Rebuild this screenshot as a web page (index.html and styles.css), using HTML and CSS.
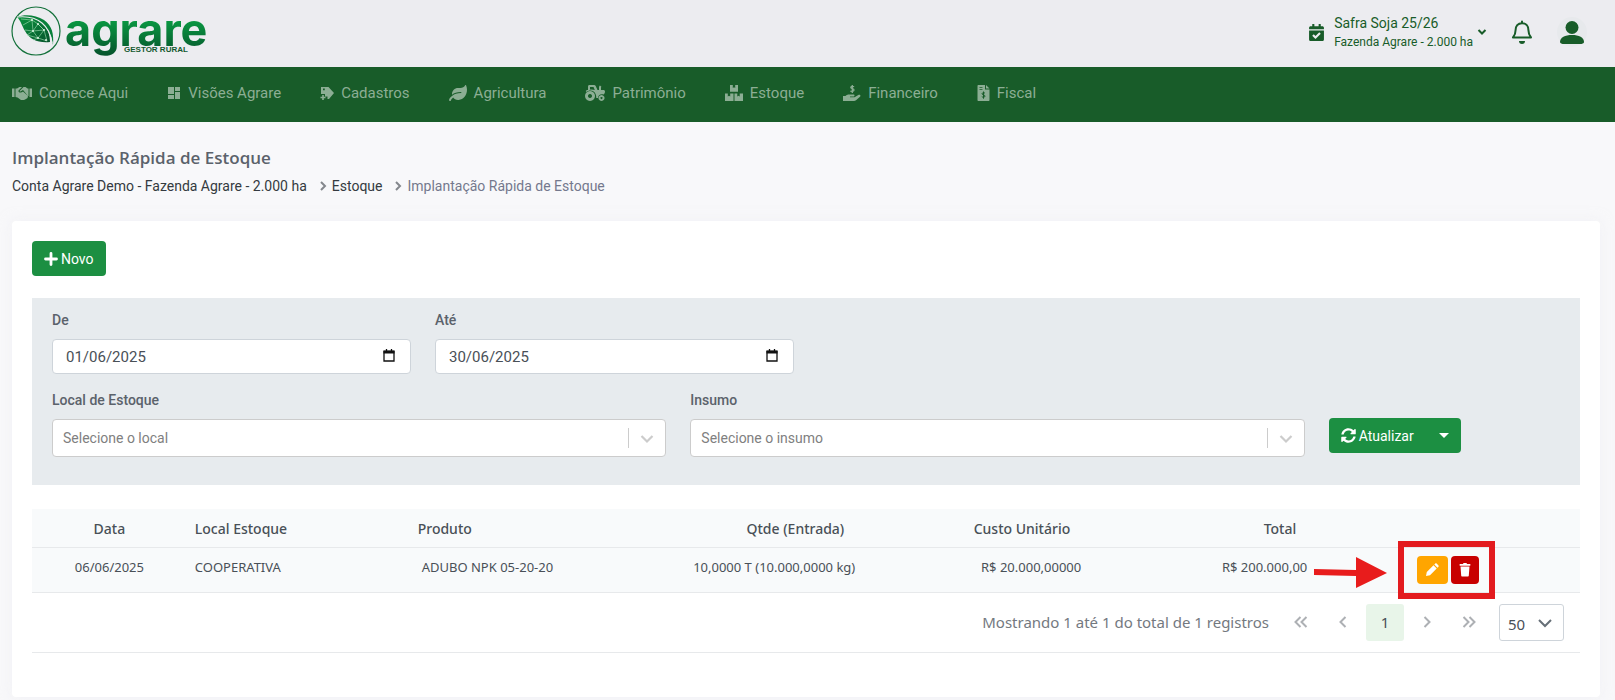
FILE: index.html
```
<!DOCTYPE html>
<html lang="pt-BR">
<head>
    <meta charset="UTF-8">
    <meta name="viewport" content="width=device-width, initial-scale=1.0">
    <title>Implantação Rápida de Estoque</title>
    <link rel="stylesheet" href="styles.css">
</head>
<body>
    <header class="topbar">
        <a class="logo" href="#">
            <svg class="logo-mark" viewBox="0 0 50 50" aria-hidden="true">
                <defs>
                    <linearGradient id="leafFill" x1="0" y1="0" x2="1" y2="1">
                        <stop offset="0" stop-color="#0b9440"/>
                        <stop offset="1" stop-color="#06552c"/>
                    </linearGradient>
                </defs>
                <circle cx="25" cy="25" r="24" fill="none" stroke="#14713b" stroke-width="1.2"/>
                <path d="M6 11c4 4 5 9 8 14 5 9 13 12 25 11 0-7-2-14-8-19-7-6-15-7-25-6z" fill="url(#leafFill)"/>
                <path d="M6 11c8-3 19-2 27 3 8 6 10 13 9 25-1-8-4-16-11-21-7-6-15-7-25-7z" fill="#08803a"/>
                <path d="M6 11c10-1 18 0 25 6 6 5 9 12 10 20" fill="none" stroke="#ececf0" stroke-width="1.1"/>
                <path d="M10 13l11 1 6 4 6 6 3 11M12 19l9-5 1 11 5-7 6 6-6 8-11-3 6-4 11-1M14 24l8 1 5 7 9 3M27 32l-5 2" fill="none" stroke="#a5e0b5" stroke-width=".6"/>
                <g fill="#d8f5df">
                    <circle cx="21" cy="14" r="1"/><circle cx="27" cy="18" r="1"/><circle cx="22" cy="25" r="1"/>
                    <circle cx="27" cy="32" r="1"/><circle cx="33" cy="24" r="1"/><circle cx="35" cy="34" r="1"/>
                </g>
            </svg>
            <span class="logo-text">agrare<small class="logo-sub">GESTOR RURAL</small></span>
        </a>
        <div class="topbar-right">
            <button class="safra" type="button">
                <svg class="safra-icon" viewBox="0 0 448 512"><path fill="currentColor" d="M436 160H12c-6.627 0-12-5.373-12-12v-36c0-26.51 21.49-48 48-48h48V12c0-6.627 5.373-12 12-12h40c6.627 0 12 5.373 12 12v52h128V12c0-6.627 5.373-12 12-12h40c6.627 0 12 5.373 12 12v52h48c26.51 0 48 21.49 48 48v36c0 6.627-5.373 12-12 12zM12 192h424c6.627 0 12 5.373 12 12v260c0 26.51-21.49 48-48 48H48c-26.51 0-48-21.49-48-48V204c0-6.627 5.373-12 12-12zm333.296 95.947l-28.169-28.398c-4.667-4.705-12.265-4.736-16.97-.068L194.12 364.665l-45.98-46.352c-4.667-4.705-12.266-4.736-16.971-.068l-28.397 28.17c-4.705 4.667-4.736 12.265-.068 16.97l82.601 83.269c4.667 4.705 12.265 4.736 16.97.068l142.953-141.805c4.705-4.667 4.736-12.265.068-16.97z"/></svg>
                <span class="safra-text">
                    <span class="safra-name">Safra Soja 25/26</span>
                    <span class="safra-farm">Fazenda Agrare - 2.000 ha</span>
                </span>
                <svg class="safra-caret" viewBox="0 0 10 10"><path d="M1.500 3L5 6.500 8.500 3" fill="none" stroke="currentColor" stroke-width="2"/></svg>
            </button>
            <button class="icon-button bell" type="button" aria-label="Notificações">
                <svg viewBox="0 0 22 24"><path d="M11 3.200c-4.200 0-6.400 3-6.400 6.800 0 4-.8 5.300-2.600 7.500h18c-1.800-2.200-2.600-3.500-2.600-7.500 0-3.800-2.200-6.800-6.400-6.800zM11 1.500v1.500" fill="none" stroke="currentColor" stroke-width="2" stroke-linejoin="round" stroke-linecap="round"/><path d="M8 21h6a3 3 0 0 1-6 0z" fill="currentColor"/></svg>
            </button>
            <button class="icon-button avatar" type="button" aria-label="Usuário">
                <svg viewBox="0 0 24 24"><circle cx="12" cy="7.500" r="6.500" fill="currentColor"/><path d="M0 22c0-4.500 5-7 12-7s12 2.500 12 7c0 1.500-2 2-4 2H4c-2 0-4-.5-4-2z" fill="currentColor"/></svg>
            </button>
        </div>
    </header>

    <nav class="menu">
        <a href="#">
            <svg width="20" height="14" viewBox="0 0 40 28" fill="currentColor"><path d="M0 5h5v17H0zM35 5h5v17h-5zM7 5h3l5-3h5l-7 7c-1 5 6 5 9 2l10 9-1 4-3 2-4 2h-6l-7-5-4-1H7zM23 2h4l4 3h2v15h-1L22 8l-5 3c-2 0-2-1-1-2z"/></svg>
            Comece Aqui
        </a>
        <a href="#">
            <svg width="14" height="14" viewBox="0 0 14 14" fill="currentColor"><path d="M1 1h6v7H1zM8 1h5v4H8zM1 9h6v4H1zM8 6h5v7H8z"/></svg>
            Visões Agrare
        </a>
        <a href="#">
            <svg width="14" height="14" viewBox="0 0 14 14" fill="currentColor"><path fill-rule="evenodd" d="M1 1h7.500L14 7l-5 6H7.500v-2.500H5V8H1zM3 2.500v1.800h1.800V2.500zM2.200 9h1.600v1.700h1.700v1.600H3.800V14H2.200v-1.700H.5v-1.600h1.700z"/></svg>
            Cadastros
        </a>
        <a href="#">
            <svg width="18" height="16" viewBox="0 0 576 512" fill="currentColor"><path d="M546.2 9.7c-5.600-12.500-21.600-13-28.300-1.200C486.900 62.400 431.400 96 368 96h-80C182 96 96 182 96 288c0 7 .8 13.700 1.500 20.500C161.300 262.800 253.400 224 384 224c8.800 0 16 7.200 16 16s-7.200 16-16 16C132.600 256 26 410.100 2.400 468c-6.600 16.300 1.200 34.900 17.500 41.600 16.400 6.800 35-1.100 41.800-17.300 1.500-3.600 20.900-47.900 71.900-90.600 32.400 43.900 94 85.800 174.900 77.200C465.500 467.500 576 326.700 576 154.300c0-50.200-10.800-102.200-29.800-144.600z"/></svg>
            Agricultura
        </a>
        <a href="#">
            <svg width="20" height="16" viewBox="0 0 20 16" fill="currentColor"><path fill-rule="evenodd" d="M3 1.500C3 .7 3.500 0 4.500 0H9c.8 0 1.400.4 1.700 1.100L12.500 5H14V2.500c0-1 .5-1.700 1-2.100l1.400 1.300c-.3.3-.4.6-.4 1V5h2.500c.8 0 1.500.7 1.500 1.500 0 1.300-.6 2.300-1.500 3-3-.9-5.500.8-5.500 3.500h-1.700c.2-4.500-2.300-7.500-6-7.500C3.800 5.500 2.600 6 1.500 7L.7 6 2 5h1zM5 2v2.500c1.500-.3 3.600 0 4.800.5L8.500 2z"/><path fill-rule="evenodd" d="M5 6a5 5 0 1 0 .01 0zM5 9a2 2 0 1 1-.01 0zM16.500 10a3 3 0 1 0 .01 0zM16.500 12a1 1 0 1 1-.01 0z"/></svg>
            Patrimônio
        </a>
        <a href="#">
            <svg width="18" height="16" viewBox="0 0 18 16" fill="currentColor"><path d="M5 0h2.800v3l1.200-.7 1.200.7V0H13v6.800H5zM0 8.500h2.800v3l1.200-.7 1.200.7v-3H8.500V16H0zM9.500 8.500h2.800v3l1.200-.7 1.200.7v-3H18V16H9.500z"/></svg>
            Estoque
        </a>
        <a href="#">
            <svg width="18" height="16" viewBox="0 0 18 16" fill="currentColor"><path d="M0 11h2.500c1-1 2-1.500 3.500-1.500h4.500c1.400 0 1.400 2 0 2H7v.8h4.500L15.300 10c1.500-1 2.900.7 1.700 1.800l-4 3.400c-.6.500-1.200.8-2 .8H0z"/><path d="M11 1.800C10.500 1.200 7.800 1 7.800 2.500S11 3.300 11 5 8 6.600 7.400 5.800M9.300 0v8" fill="none" stroke="currentColor" stroke-width="1.300"/></svg>
            Financeiro
        </a>
        <a href="#">
            <svg width="13" height="16" viewBox="0 0 13 16" fill="currentColor"><path fill-rule="evenodd" d="M1.500 0H8v4.500h4.500V15c0 .6-.4 1-1 1h-10c-.6 0-1-.4-1-1V1c0-.6.4-1 1-1zM2.500 2v.8h3V2zM2.500 4v.8h3V4zM9 0l3.500 3.500H9z"/><path d="M8 8.200C7.500 7.600 5 7.500 5 8.800s3 .8 3 2.300-2.600 1.300-3.200.5M6.500 6.500v7.200" fill="none" stroke="#185c29"/></svg>
            Fiscal
        </a>
    </nav>

    <main class="page">
        <h1 class="page-title">Implantação Rápida de Estoque</h1>
        <ol class="breadcrumb">
            <li><a href="#">Conta Agrare Demo - Fazenda Agrare - 2.000 ha</a></li>
            <li>
                <svg class="crumb-sep" viewBox="0 0 8 10"><path d="M2 1l4 4-4 4" fill="none" stroke="currentColor" stroke-width="2"/></svg>
                <a href="#">Estoque</a>
            </li>
            <li class="current">
                <svg class="crumb-sep" viewBox="0 0 8 10"><path d="M2 1l4 4-4 4" fill="none" stroke="currentColor" stroke-width="2"/></svg>
                Implantação Rápida de Estoque
            </li>
        </ol>

        <section class="card">
            <button class="btn btn-success" type="button">
                <svg width="14" height="14" viewBox="0 0 14 14"><path d="M7 1.500v11M1.500 7h11" stroke="currentColor" stroke-width="2.800" stroke-linecap="round"/></svg>
                Novo
            </button>

            <form class="filters">
                <div class="field span-3">
                    <label for="de">De</label>
                    <div class="control">
                        <input class="input" id="de" type="text" value="01/06/2025">
                        <svg class="calendar" viewBox="0 0 12 13"><path d="M1 2.500h10v9.500H1zM3.500 0v2M8.500 0v2" fill="none" stroke="#111" stroke-width="1.300"/><path d="M.5 1.500h11V4.500H.5z" fill="#111"/></svg>
                    </div>
                </div>
                <div class="field span-3">
                    <label for="ate">Até</label>
                    <div class="control">
                        <input class="input" id="ate" type="text" value="30/06/2025">
                        <svg class="calendar" viewBox="0 0 12 13"><path d="M1 2.500h10v9.500H1zM3.500 0v2M8.500 0v2" fill="none" stroke="#111" stroke-width="1.300"/><path d="M.5 1.500h11V4.500H.5z" fill="#111"/></svg>
                    </div>
                </div>
                <div class="field local">
                    <label for="local">Local de Estoque</label>
                    <div class="control">
                        <select class="select" id="local"><option>Selecione o local</option></select>
                        <svg class="select-arrow" viewBox="0 0 38 20"><path d="M.5 0v20" stroke="#ccc"/><path d="M13.500 8l5.500 5.500L24.500 8" fill="none" stroke="#ccc" stroke-width="2.200"/></svg>
                    </div>
                </div>
                <div class="field span-5">
                    <label for="insumo">Insumo</label>
                    <div class="control">
                        <select class="select" id="insumo"><option>Selecione o insumo</option></select>
                        <svg class="select-arrow" viewBox="0 0 38 20"><path d="M.5 0v20" stroke="#ccc"/><path d="M13.500 8l5.500 5.500L24.500 8" fill="none" stroke="#ccc" stroke-width="2.200"/></svg>
                    </div>
                </div>
                <div class="update">
                    <button class="btn btn-success" type="button">
                        <svg width="15" height="15" viewBox="0 0 512 512"><path fill="currentColor" d="M370.720 133.280C339.458 104.008 298.888 87.962 255.848 88c-77.458.068-144.328 53.178-162.791 126.850-1.344 5.363-6.122 9.150-11.651 9.150H24.103c-7.498 0-13.194-6.807-11.807-14.176C33.933 94.924 134.813 8 256 8c66.448 0 126.791 26.136 171.315 68.685L463.030 40.970C478.149 25.851 504 36.559 504 57.941V192c0 13.255-10.745 24-24 24H345.941c-21.382 0-32.090-25.851-16.971-40.971l41.750-41.749zM32 296h134.059c21.382 0 32.090 25.851 16.971 40.971l-41.750 41.750c31.262 29.273 71.835 45.319 114.876 45.280 77.418-.070 144.315-53.144 162.787-126.849 1.344-5.363 6.122-9.150 11.651-9.150h57.304c7.498 0 13.194 6.807 11.807 14.176C478.067 417.076 377.187 504 256 504c-66.448 0-126.791-26.136-171.315-68.685L48.970 471.030C33.851 486.149 8 475.441 8 454.059V320c0-13.255 10.745-24 24-24z"/></svg>
                        Atualizar
                    </button>
                    <button class="btn btn-success" type="button" aria-label="Mais opções">
                        <svg width="10" height="5" viewBox="0 0 10 5"><path d="M0 0h10L5 5z" fill="currentColor"/></svg>
                    </button>
                </div>
            </form>

            <table class="grid">
                <thead>
                    <tr>
                        <th class="col-date">Data</th>
                        <th class="col-place">Local Estoque</th>
                        <th class="col-product">Produto</th>
                        <th class="col-qty num">Qtde (Entrada)</th>
                        <th class="col-cost num">Custo Unitário</th>
                        <th class="col-total num">Total</th>
                        <th class="col-actions"></th>
                    </tr>
                </thead>
                <tbody>
                    <tr>
                        <td class="col-date">06/06/2025</td>
                        <td>COOPERATIVA</td>
                        <td class="col-product">ADUBO NPK 05-20-20</td>
                        <td class="num">10,0000 T (10.000,0000 kg)</td>
                        <td class="num">R$ 20.000,00000</td>
                        <td class="num">R$ 200.000,00</td>
                        <td class="col-actions">
                            <div class="actions">
                                <button class="action edit" type="button" aria-label="Editar">
                                    <svg width="14" height="14" viewBox="0 0 14 14" fill="currentColor"><path d="M1 13l.8-4L8.500 2.300l3.200 3.200L5 12.200zM9.300 1.500l.8-.8c.5-.5 1.200-.5 1.700 0l1.500 1.500c.5.5.5 1.200 0 1.700l-.8.8z"/></svg>
                                </button>
                                <button class="action delete" type="button" aria-label="Excluir">
                                    <svg width="12" height="14" viewBox="0 0 12 14" fill="currentColor"><path d="M1 1h3l.5-1h3L8 1h3c.6 0 .6 1.800 0 1.800H1C.4 2.800.4 1 1 1zM1.500 3.500h9l-.7 9c0 .6-.5 1-1 1H3.200c-.5 0-1-.4-1-1z"/></svg>
                                </button>
                                <!-- seta e moldura vermelhas -->
                                <svg class="highlight" viewBox="0 0 181 58" aria-hidden="true">
                                    <path d="M0 28l42 1V16l31 16-31 15V35L0 34z" fill="#e81c1c"/>
                                    <rect x="87" y="3" width="91" height="52" fill="none" stroke="#e31b1f" stroke-width="6"/>
                                </svg>
                            </div>
                        </td>
                    </tr>
                </tbody>
            </table>

            <div class="pager">
                <span class="pager-info">Mostrando 1 até 1 do total de 1 registros</span>
                <div class="pager-buttons">
                    <button type="button" aria-label="Primeira"><svg viewBox="0 0 14 12"><path d="M6.500 1l-5 5 5 5M12.500 1l-5 5 5 5"/></svg></button>
                    <button type="button" aria-label="Anterior"><svg viewBox="0 0 14 12"><path d="M9.500 1l-5 5 5 5"/></svg></button>
                    <button class="active" type="button">1</button>
                    <button type="button" aria-label="Próxima"><svg viewBox="0 0 14 12"><path d="M4.500 1l5 5-5 5"/></svg></button>
                    <button type="button" aria-label="Última"><svg viewBox="0 0 14 12"><path d="M1.500 1l5 5-5 5M7.500 1l5 5-5 5"/></svg></button>
                </div>
                <div class="control">
                    <select class="page-size" aria-label="Registros por página"><option>50</option></select>
                    <svg class="page-size-arrow" viewBox="0 0 14 9"><path d="M1 1l6 6 6-6" fill="none" stroke="#666f77" stroke-width="2"/></svg>
                </div>
            </div>
        </section>
    </main>
</body>
</html>
```
FILE: styles.css
```
* {
    box-sizing: border-box;
}
body {
    margin: 0;
    background: #f8f8fa;
    color: #495057;
    font-family: Roboto, "Liberation Sans", sans-serif;
    font-size: 14px;
    line-height: 20px;
}
button, input, select {
    font: inherit;
    color: inherit;
}
button {
    border: 0;
    padding: 0;
    background: none;
    cursor: pointer;
}
a {
    color: inherit;
    text-decoration: none;
}
svg {
    display: block;
    flex: none;
}

/* topo */
.topbar {
    display: flex;
    justify-content: space-between;
    align-items: center;
    height: 67px;
    padding: 0 28px 3px 11px;
    background: #ececf0;
    color: #185c29;
}
.logo {
    display: flex;
    align-items: center;
    gap: 4px;
}
.logo-mark {
    width: 50px;
    height: 50px;
    margin-bottom: 2px;
}
.logo-text {
    position: relative;
    padding-bottom: 4px;
    font-family: Inter, sans-serif;
    font-size: 45px;
    font-weight: 700;
    line-height: 60px;
    background: linear-gradient(#0a9a43 30%, #06552c 85%);
    background-clip: text;
    -webkit-background-clip: text;
    color: transparent;
}
.logo-sub {
    position: absolute;
    left: 59px;
    bottom: 10px;
    font-family: "Liberation Sans", sans-serif;
    font-size: 8px;
    font-weight: 700;
    line-height: 8px;
    white-space: nowrap;
    color: #14592f;
}
.topbar-right {
    display: flex;
    align-items: center;
}
.safra {
    display: flex;
    align-items: center;
    text-align: left;
}
.safra-icon {
    width: 15px;
    height: 17px;
    margin-right: 10px;
}
.safra-text {
    display: flex;
    flex-direction: column;
}
.safra-farm {
    font-size: 12px;
    line-height: 18px;
}
.safra-caret {
    width: 10px;
    height: 10px;
    margin-left: 4px;
}
.bell svg {
    width: 22px;
    height: 24px;
}
.bell {
    margin: 0 24px;
}
.avatar {
    display: flex;
    justify-content: center;
    align-items: center;
    width: 30px;
    height: 30px;
    border-radius: 50%;
    background: #e7e9ec;
}
.avatar svg {
    width: 24px;
    height: 24px;
}

/* menu */
.menu {
    display: flex;
    align-items: center;
    gap: 39px;
    height: 55px;
    padding: 0 12px 4px;
    background: #185c29;
    color: #8cae94;
    font-size: 15px;
}
.menu a {
    display: flex;
    align-items: center;
    gap: 7px;
    white-space: nowrap;
}

/* conteudo */
.page {
    padding: 26px 15px 4px 12px;
}
.page-title {
    margin: 0;
    font-family: "Open Sans", sans-serif;
    font-size: 17px;
    font-weight: 600;
    line-height: 20px;
    color: #5b626b;
}
.breadcrumb {
    display: flex;
    margin: 8px 0 25px;
    padding: 0;
    list-style: none;
    color: #343a40;
}
.breadcrumb li {
    display: flex;
    align-items: center;
    gap: 5px;
}
.breadcrumb li + li {
    padding-left: 12px;
}
.breadcrumb .current {
    color: #74788d;
}
.crumb-sep {
    width: 8px;
    height: 10px;
    color: #84878c;
}
.card {
    padding: 20px 20px 44px;
    background: #fff;
    border-radius: 4px;
    box-shadow: 0 0 13px rgba(236, 236, 241, 0.5);
}
.btn {
    display: flex;
    align-items: center;
    gap: 3px;
    height: 35px;
    padding: 0 12px;
    border-radius: 4px;
}
.btn-success {
    background: #1c8f42;
    color: #fff;
}

/* filtros */
.filters {
    display: grid;
    grid-template-columns: repeat(12, 1fr);
    gap: 16px 24px;
    margin: 22px 0 24px;
    padding: 12px 20px 28px;
    background: #e7ebee;
}
.span-3 {
    grid-column: span 3;
}
.span-5 {
    grid-column: span 5;
}
.local {
    grid-column: 1 / span 5;
}
.field label {
    display: block;
    margin-bottom: 9px;
    font-weight: 500;
    color: #5b626b;
}
.control {
    position: relative;
}
.input, .select {
    display: block;
    width: 100%;
    border: 1px solid #ced4da;
    border-radius: 4px;
    background: #fff;
}
.input {
    height: 35px;
    padding: 0 13px;
    font-size: 15px;
}
.calendar {
    position: absolute;
    top: 10px;
    right: 16px;
    width: 12px;
    height: 13px;
}
.select {
    height: 38px;
    padding: 0 48px 0 10px;
    border-color: #ccc;
    color: #808080;
    appearance: none;
}
.select-arrow {
    position: absolute;
    top: 9px;
    right: 0;
    width: 38px;
    height: 20px;
    pointer-events: none;
}
.update {
    grid-column: span 2;
    display: flex;
    padding-top: 28px;
}
.update .btn:first-child {
    padding-right: 13px;
    border-radius: 4px 0 0 4px;
}
.update .btn:last-child {
    border-radius: 0 4px 4px 0;
}

/* tabela */
.grid {
    width: 100%;
    table-layout: fixed;
    border-collapse: collapse;
    background: #f8fafb;
    font-family: "Noto Sans", sans-serif;
    font-size: 13px;
}
.grid th, .grid td {
    padding: 0 8px;
    border-bottom: 1px solid #e7e9eb;
    text-align: left;
    white-space: nowrap;
}
.grid th {
    height: 38px;
    padding-top: 2px;
    font-size: 14px;
    font-weight: 500;
}
.grid td {
    height: 45px;
    padding-bottom: 5px;
}
.grid .col-date {
    width: 10%;
    text-align: center;
}
.col-place {
    width: 14.4%;
}
.col-product {
    width: 14.7%;
}
.grid td.col-product {
    padding-left: 12px;
}
.col-qty, .col-cost, .col-total {
    width: 14.6%;
}
.grid .num {
    text-align: right;
}
.grid th.num {
    padding-right: 19px;
}
.grid td.col-actions {
    padding-bottom: 0;
    text-align: center;
}
.actions {
    display: inline-flex;
    gap: 3px;
    position: relative;
    vertical-align: middle;
}
.action {
    display: flex;
    justify-content: center;
    align-items: center;
    width: 28px;
    height: 28px;
    border-radius: 4px;
    color: #fff;
}
.edit {
    width: 31px;
    background: #ffa500;
}
.delete {
    background: #c80000;
}
.highlight {
    position: absolute;
    top: -15px;
    left: -103px;
    width: 181px;
    height: 58px;
    pointer-events: none;
}

/* paginacao */
.pager {
    display: flex;
    justify-content: flex-end;
    align-items: center;
    height: 60px;
    padding-right: 16px;
    border-bottom: 1px solid #e7e9eb;
    font-family: "Noto Sans", sans-serif;
    font-size: 15px;
}
.pager-info {
    color: #74797f;
}
.pager-buttons {
    display: flex;
    gap: 4px;
    margin: 0 11px 0 13px;
}
.pager-buttons button {
    display: flex;
    justify-content: center;
    align-items: center;
    width: 38px;
    height: 37px;
    border-radius: 3px;
}
.pager-buttons .active {
    background: #e8f5e9;
}
.pager-buttons svg {
    width: 14px;
    height: 12px;
    fill: none;
    stroke: #adb0b4;
    stroke-width: 2;
}
.page-size {
    display: block;
    width: 65px;
    height: 37px;
    padding: 4px 8px 0;
    border: 1px solid #ced4da;
    border-radius: 3px;
    background: #fff;
    appearance: none;
}
.page-size-arrow {
    position: absolute;
    top: 15px;
    right: 12px;
    width: 14px;
    height: 9px;
    pointer-events: none;
}
```
